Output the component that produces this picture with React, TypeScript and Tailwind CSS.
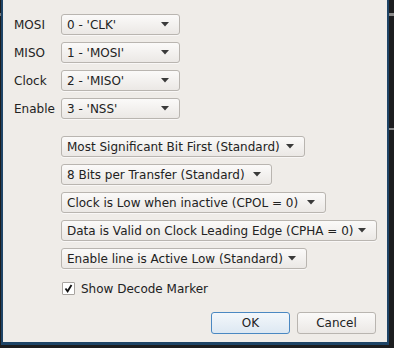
import React from "react";

const Arrow = () => (
  <svg width="8" height="5" viewBox="0 0 8 5" className="shrink-0">
    <path d="M0 0 L8 0 L4 4.5 Z" fill="#3a3a3a" />
  </svg>
);

function Combo({ text, w }: { text: string; w: string }) {
  return (
    <div
      className={`${w} h-[21px] flex items-center justify-between pl-[5px] pr-[10px] rounded-[3px] border border-[#b9b5b0] bg-gradient-to-b from-[#fbfaf9] to-[#ebe8e5] text-[#222] shadow-[0_1px_0_rgba(255,255,255,0.6)]`}
    >
      <span className="whitespace-nowrap leading-none">{text}</span>
      <Arrow />
    </div>
  );
}

export default function App() {
  const pins: [string, string][] = [
    ["MOSI", "0 - 'CLK'"],
    ["MISO", "1 - 'MOSI'"],
    ["Clock", "2 - 'MISO'"],
    ["Enable", "3 - 'NSS'"],
  ];
  const opts: [string, string][] = [
    ["Most Significant Bit First (Standard)", "w-[244px]"],
    ["8 Bits per Transfer (Standard)", "w-[211px]"],
    ["Clock is Low when inactive (CPOL = 0)", "w-[265px]"],
    ["Data is Valid on Clock Leading Edge (CPHA = 0)", "w-[316px]"],
    ["Enable line is Active Low (Standard)", "w-[246px]"],
  ];
  return (
    <div
      className="w-[394px] h-[348px] flex flex-col bg-[#1c1d1f] text-[12px] overflow-hidden"
      style={{ fontFamily: '"DejaVu Sans", sans-serif' }}
    >
      <div className="flex flex-1 min-h-0">
        <div className="w-[1px] bg-[#1c1d1f] flex flex-col">
          <div className="h-[13px]" />
          <div className="h-[3px] bg-[#777]" />
        </div>
        <div className="w-[2px] bg-[#1e4466]" />
        <div className="flex-1 bg-[#efece8] flex flex-col">
          <div className="flex flex-col gap-[7px] pt-[14px] pl-[11px]">
            {pins.map(([l, v]) => (
              <div key={l} className="flex items-center h-[21px]">
                <span className="w-[47px] text-[#222]">{l}</span>
                <Combo text={v} w="w-[119px]" />
              </div>
            ))}
          </div>
          <div className="flex flex-col gap-[7px] pt-[17px] pl-[58px]">
            {opts.map(([t, w]) => (
              <Combo key={t} text={t} w={w} />
            ))}
          </div>
          <div className="flex items-center pl-[59px] mt-[13px] h-[13px]">
            <div className="w-[13px] h-[13px] border border-[#a8a4a0] bg-white flex items-center justify-center rounded-[1px]">
              <svg width="9" height="9" viewBox="0 0 9 9">
                <path d="M1.5 4.5 L3.6 7.3 L7.5 1" stroke="#111" strokeWidth="1.8" fill="none" />
              </svg>
            </div>
            <span className="ml-[6px] text-[#222] whitespace-nowrap">Show Decode Marker</span>
          </div>
          <div className="flex justify-end gap-[7px] pr-[11px] mt-[17px]">
            <button className="w-[79px] h-[22px] rounded-[3px] border border-[#4a88c2] bg-gradient-to-b from-[#f3f7fb] to-[#dde8f2] text-[#222] leading-none">
              OK
            </button>
            <button className="w-[79px] h-[22px] rounded-[3px] border border-[#b9b5b0] bg-gradient-to-b from-[#fbfaf9] to-[#ebe8e5] text-[#222] leading-none">
              Cancel
            </button>
          </div>
        </div>
        <div className="w-[2px] bg-[#1e4466]" />
        <div className="w-[5px] bg-[#1c1d1f] flex flex-col">
          <div className="h-[13px]" />
          <div className="h-[3px] bg-[#8a8a8a]" />
          <div className="h-[112px]" />
          <div className="h-[2px] bg-[#8a8a8a]" />
        </div>
      </div>
      <div className="h-[3px] ml-[1px] mr-[5px] bg-[#1e4466]" />
      <div className="h-[3px]" />
    </div>
  );
}
